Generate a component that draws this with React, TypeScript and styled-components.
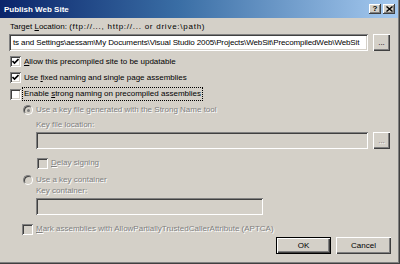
import React from "react";
import styled, { createGlobalStyle, css } from "styled-components";

const Global = createGlobalStyle`
  html, body { margin: 0; padding: 0; background: #d4d0c8; }
  body { font-family: "Liberation Sans", Arial, sans-serif; font-size: 8px; }
`;

const Window = styled.div`
  width: 400px;
  height: 264px;
  box-sizing: border-box;
  background: #d4d0c8;
  box-shadow: inset -1px -1px #404040, inset -2px -2px #808080;
  display: flex;
  flex-direction: column;
  color: #000;
`;

const TitleBar = styled.div`
  height: 18px;
  margin-right: 2px;
  background: linear-gradient(to right, #0a246a 0%, #3a6ea5 45%, #a6caf0 100%);
  display: flex;
  align-items: center;
  padding: 0 3px 0 4px;
`;

const Title = styled.span`
  color: #fff;
  font-weight: bold;
  font-size: 8px;
  flex: 1;
`;

const CaptionBtn = styled.div<{ $gap?: boolean }>`
  width: 12px;
  height: 10px;
  margin-left: ${(p) => (p.$gap ? "2px" : "0")};
  background: #d4d0c8;
  box-shadow: inset -1px -1px #404040, inset 1px 1px #fff, inset -2px -2px #808080;
  display: flex;
  align-items: center;
  justify-content: center;
  font-weight: bold;
  font-size: 8px;
  line-height: 10px;
`;

const Body = styled.div`
  display: flex;
  flex-direction: column;
  padding: 4px 9px 0 9px;
`;

const Label = styled.div<{ $disabled?: boolean; $mt?: number; $ml?: number }>`
  height: 10px;
  line-height: 10px;
  white-space: nowrap;
  margin-top: ${(p) => p.$mt ?? 0}px;
  margin-left: ${(p) => p.$ml ?? 0}px;
  ${(p) =>
    p.$disabled &&
    css`
      color: #808080;
      text-shadow: 1px 1px #fff;
    `}
`;

const Hint = styled.span`
  letter-spacing: 0.75px;
`;

const Row = styled.div<{ $mt?: number; $ml?: number; $h?: number }>`
  display: flex;
  align-items: center;
  height: ${(p) => p.$h ?? 12}px;
  margin-top: ${(p) => p.$mt ?? 0}px;
  margin-left: ${(p) => p.$ml ?? 0}px;
  white-space: nowrap;
`;

const TextBox = styled.div<{ $w: number; $disabled?: boolean }>`
  width: ${(p) => p.$w}px;
  height: 17px;
  box-sizing: border-box;
  background: ${(p) => (p.$disabled ? "#d4d0c8" : "#fff")};
  box-shadow: inset 1px 1px #808080, inset -1px -1px #fff, inset 2px 2px #404040,
    inset -2px -2px #d4d0c8;
  padding: 0 2px 0 4px;
  display: flex;
  align-items: center;
  overflow: hidden;
  white-space: nowrap;
  letter-spacing: -0.12px;
`;

const Btn = styled.div<{ $w: number; $h: number; $default?: boolean; $disabled?: boolean; $ml?: number }>`
  width: ${(p) => p.$w}px;
  height: ${(p) => p.$h}px;
  margin-left: ${(p) => p.$ml ?? 0}px;
  box-sizing: border-box;
  background: #d4d0c8;
  display: flex;
  align-items: center;
  justify-content: center;
  ${(p) =>
    p.$default
      ? css`
          box-shadow: inset 1px 1px #000, inset -1px -1px #000, inset 2px 2px #fff,
            inset -2px -2px #404040, inset -3px -3px #808080;
        `
      : css`
          box-shadow: inset 1px 1px #fff, inset -1px -1px #404040, inset -2px -2px #808080;
        `}
  ${(p) =>
    p.$disabled &&
    css`
      color: #808080;
      text-shadow: 1px 1px #fff;
    `}
`;

const Box = styled.div<{ $disabled?: boolean }>`
  width: 11px;
  height: 11px;
  box-sizing: border-box;
  flex-shrink: 0;
  background: ${(p) => (p.$disabled ? "#d4d0c8" : "#fff")};
  box-shadow: inset 1px 1px #808080, inset -1px -1px #fff, inset 2px 2px #404040,
    inset -2px -2px #d4d0c8;
  display: flex;
  align-items: center;
  justify-content: center;
  margin-right: 3px;
`;

const Radio = styled.div`
  width: 10px;
  height: 10px;
  box-sizing: border-box;
  border-radius: 50%;
  flex-shrink: 0;
  background: #d4d0c8;
  border: 1px solid;
  border-color: #808080 #fff #fff #808080;
  box-shadow: inset 1px 1px #404040;
  display: flex;
  align-items: center;
  justify-content: center;
  margin-right: 3px;
`;

const Dot = styled.div`
  width: 3px;
  height: 3px;
  border-radius: 50%;
  background: #808080;
`;

const Focus = styled.span`
  outline: 1px dotted #000;
  outline-offset: 0px;
  padding: 1px 1px;
  margin-left: -1px;
  line-height: 10px;
`;

const U = styled.span`
  text-decoration: underline;
`;

const Footer = styled.div`
  display: flex;
  justify-content: flex-end;
  margin-top: 2px;
`;

const Check = () => (
  <svg width="7" height="7" viewBox="0 0 7 7">
    <path d="M0.5 3 L2.5 5 L6.5 1" stroke="#000" strokeWidth="1.6" fill="none" />
  </svg>
);

export default function App() {
  return (
    <>
      <Global />
      <Window>
        <TitleBar>
          <Title>Publish Web Site</Title>
          <CaptionBtn>?</CaptionBtn>
          <CaptionBtn $gap>
            <svg width="7" height="6" viewBox="0 0 7 6">
              <path d="M0.5 0.5 L6.5 5.5 M6.5 0.5 L0.5 5.5" stroke="#000" strokeWidth="1.4" />
            </svg>
          </CaptionBtn>
        </TitleBar>
        <Body>
          <Label $ml={1}>
            Target <U>L</U>ocation: <Hint>(ftp://..., http://... or drive:\path)</Hint>
          </Label>
          <Row $mt={2} $h={17}>
            <TextBox $w={359}>
              ts and Settings\aessam\My Documents\Visual Studio 2005\Projects\WebSit\PrecompiledWeb\WebSit
            </TextBox>
            <Btn $w={17} $h={17} $ml={5}>...</Btn>
          </Row>
          <Row $mt={4} $ml={1}>
            <Box>
              <Check />
            </Box>
            <span>
              <U>A</U>llow this precompiled site to be updatable
            </span>
          </Row>
          <Row $mt={4} $ml={1}>
            <Box>
              <Check />
            </Box>
            <span>
              Use <U>f</U>ixed naming and single page assemblies
            </span>
          </Row>
          <Row $mt={5} $ml={1}>
            <Box />
            <Focus>
              Enable <U>s</U>trong naming on precompiled assemblies
            </Focus>
          </Row>
          <Row $mt={4} $ml={14}>
            <Radio>
              <Dot />
            </Radio>
            <Label $disabled>Use a key file generated with the Strong Name tool</Label>
          </Row>
          <Label $disabled $mt={4} $ml={27}>
            Key file location:
          </Label>
          <Row $mt={2} $h={17} $ml={27}>
            <TextBox $w={332} $disabled />
            <Btn $w={17} $h={17} $ml={5} $disabled>
              ...
            </Btn>
          </Row>
          <Row $mt={8} $ml={28}>
            <Box $disabled />
            <Label $disabled>
              <U>D</U>elay signing
            </Label>
          </Row>
          <Row $mt={5} $ml={14}>
            <Radio />
            <Label $disabled>Use a key container</Label>
          </Row>
          <Label $disabled $ml={27}>
            Key container:
          </Label>
          <Row $mt={2} $h={17} $ml={27}>
            <TextBox $w={227} $disabled />
          </Row>
          <Row $mt={8} $ml={13}>
            <Box $disabled />
            <Label $disabled>
              <U>M</U>ark assemblies with AllowPartiallyTrustedCallerAttribute (APTCA)
            </Label>
          </Row>
          <Footer>
            <Btn $w={55} $h={17} $default>
              OK
            </Btn>
            <Btn $w={55} $h={17} $ml={5}>
              Cancel
            </Btn>
          </Footer>
        </Body>
      </Window>
    </>
  );
}
